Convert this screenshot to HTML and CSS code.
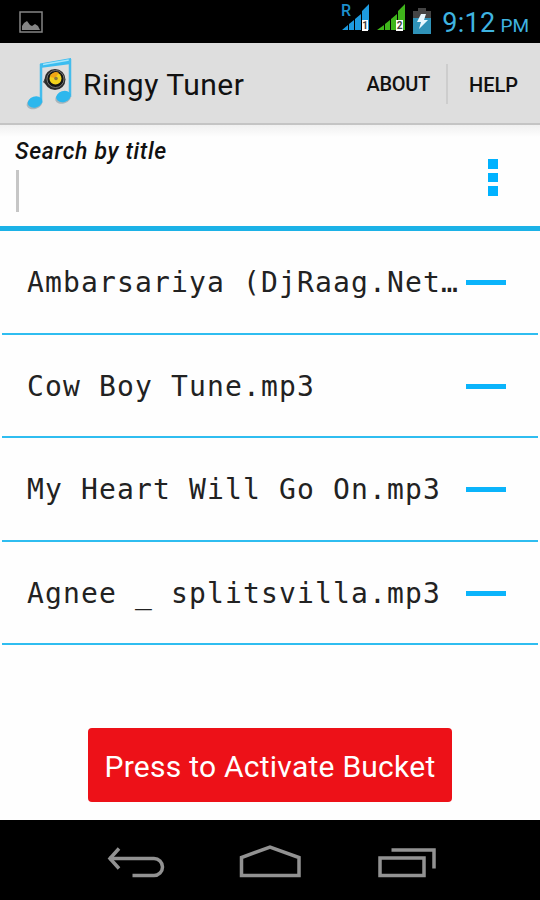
FILE: index.html
```html
<!DOCTYPE html>
<html lang="en">
<head>
    <meta charset="UTF-8">
    <meta name="viewport" content="width=device-width, initial-scale=1.0">
    <title>Ringy Tuner</title>
    <link rel="stylesheet" href="styles.css">
</head>
<body>
    <div class="status">
        <svg class="picture" width="24" height="22" viewBox="0 0 24 22">
            <rect x="1" y="1" width="22" height="20" fill="none" stroke="#858585" stroke-width="1.5"/>
            <path d="M3 19v-4l2-3 3-2 3 4 2 1 3-2 3 2 2 4z" fill="#858585"/>
        </svg>
        <div class="status-right">
            <svg width="92" height="34" viewBox="0 0 92 34">
                <text x="0" y="15" class="roam">R</text>
                <path d="M1 29l6-5v5zM8 23l5-4v10H8zM14 18l6-5v16h-6zM21 10l7-7v26h-7z" fill="#1d9be0"/>
                <path d="M36 29l7-5v5zM44 23l5-4v10h-5zM50 18l6-5v16h-6zM57 10l7-7v26h-7z" fill="#3fb51b"/>
                <rect x="21" y="19" width="6" height="11" fill="#fff"/>
                <rect x="55" y="19" width="7" height="11" fill="#fff"/>
                <text x="21.3" y="28" class="sim">1</text>
                <text x="55.8" y="28" class="sim">2</text>
                <path d="M77 7h8v3h5v7H72v-7h5z" fill="#444"/>
                <path d="M72 17h18v16H72z" fill="#2f92b8"/>
                <path d="M80 13h5l-2 6h4l-9 9 2-7h-4z" fill="#e8f8ff"/>
            </svg>
            <span class="clock">9:12</span>
            <span class="pm">PM</span>
        </div>
    </div>

    <div class="bar">
        <svg class="logo" width="48" height="54" viewBox="0 0 48 54">
            <path d="M14 6.500L45 1v6L14 11z" fill="#3cbdf0"/>
            <path d="M17 7.500L43 3" stroke="#a6e6fb" stroke-width="1.500"/>
            <path d="M15 7v39M44 2v38" stroke="#45bcec" stroke-width="2.500"/>
            <ellipse cx="8.500" cy="46.500" rx="8" ry="5.500" transform="rotate(-18 8.500 46.500)" fill="#a9b6bc"/>
            <ellipse cx="9" cy="45" rx="7.500" ry="5.500" transform="rotate(-18 9 45)" fill="#2db7ed"/>
            <ellipse cx="37" cy="41" rx="8" ry="5.500" transform="rotate(-18 37 41)" fill="#a9b6bc"/>
            <ellipse cx="37.500" cy="39.500" rx="7.500" ry="5.500" transform="rotate(-18 37.500 39.500)" fill="#2db7ed"/>
            <path d="M17 25l6-10 10 17-10-2z" fill="#444"/>
            <circle cx="29" cy="22.500" r="10.500" fill="#2b2b2b"/>
            <circle cx="29.500" cy="22" r="8.500" fill="#151515" stroke="#888" stroke-width=".8"/>
            <circle cx="29.500" cy="21.500" r="6" fill="#f3d31b"/>
            <path d="M24 20a6 6 0 0 1 9-4l-4 5z" fill="#f0a516"/>
            <circle cx="30" cy="21.500" r="1.800" fill="#8a7a42"/>
        </svg>
        <span class="title">Ringy Tuner</span>
        <span class="menu about">ABOUT</span>
        <span class="menu help">HELP</span>
    </div>

    <div class="search">
        <div>
            <p class="label">Search by title</p>
            <div class="cursor"></div>
        </div>
        <div class="dots"><i></i><i></i><i></i></div>
    </div>

    <div class="list">
        <div class="row"><span class="song">Ambarsariya (DjRaag.Net…</span><span class="minus"></span></div>
        <div class="row"><span class="song">Cow Boy Tune.mp3</span><span class="minus"></span></div>
        <div class="row"><span class="song">My Heart Will Go On.mp3</span><span class="minus"></span></div>
        <div class="row"><span class="song">Agnee _ splitsvilla.mp3</span><span class="minus"></span></div>
    </div>

    <div class="bottom">
        <button class="btn">Press to Activate Bucket</button>
    </div>

    <div class="nav">
        <svg width="340" height="40" viewBox="0 0 340 40" fill="none" stroke="#929292" stroke-width="3.500">
            <path d="M9 13.500h45a8.500 8.500 0 0 1 0 17H32.500"/>
            <path d="M19 3.500l-9 10 9 10"/>
            <path d="M141.500 30.500V12.500L170 2 199 12.500v18z"/>
            <rect x="280" y="13" width="44" height="17.500"/>
            <path d="M291.500 5H334v18.500"/>
        </svg>
    </div>
</body>
</html>
```

FILE: styles.css
```css
*{
    box-sizing: border-box;
}
body{
    margin: 0;
    height: 900px;
    display: flex;
    flex-direction: column;
    background-color: #fefefe;
    font-family: Roboto, sans-serif;
    color: #111;
    overflow: hidden;
}
.status{
    height: 43px;
    display: flex;
    justify-content: space-between;
    background-color: #000;
    padding: 0 11px 0 19px;
}
.picture{
    margin-top: 11px;
}
.status-right{
    display: flex;
    align-items: baseline;
    color: #3fb4e0;
}
.status-right svg{
    align-self: flex-start;
    margin: 1px 9px 0 0;
}
.roam{
    font-size: 16px;
    font-weight: 500;
    fill: #1d8fcc;
}
.sim{
    font-size: 10px;
    font-weight: 700;
    fill: #444;
}
.clock{
    font-size: 27px;
    line-height: 46px;
    letter-spacing: .3px;
}
.pm{
    margin-left: 5px;
    font-size: 19px;
}

.bar{
    height: 82px;
    flex: none;
    display: flex;
    align-items: center;
    background-color: #dedede;
    border-bottom: 2px solid #c4c4c4;
    padding: 1px 22px 0 26px;
}
.logo{
    margin-right: 9px;
}
.title{
    flex: 1;
    padding-top: 2px;
    font-size: 30px;
    letter-spacing: .5px;
}
.menu{
    padding-top: 2px;
    font-size: 20px;
    font-weight: 500;
}
.about{
    padding: 0 16px 0 0;
    line-height: 40px;
    letter-spacing: -.3px;
    border-right: 2px solid #cdcdcd;
}
.help{
    padding-left: 21px;
}

.search{
    height: 106px;
    flex: none;
    display: flex;
    justify-content: space-between;
    background: linear-gradient(#f0f0f0, #fefefe 12px);
    border-bottom: 5px solid #1cb2e7;
    padding: 0 42px 0 15px;
}
.label{
    margin: 13px 0 4px;
    font-size: 23px;
    line-height: 28px;
    letter-spacing: .65px;
    font-weight: 500;
    font-style: italic;
}
.cursor{
    width: 3px;
    height: 42px;
    margin-left: 1px;
    background-color: #c6c6c6;
}
.dots{
    display: flex;
    flex-direction: column;
    gap: 4px;
    margin-top: 34px;
}
.dots i{
    width: 10px;
    height: 9.6px;
    background-color: #00b2ff;
}

.row{
    height: 103.6px;
    display: flex;
    align-items: center;
    justify-content: space-between;
    margin: 0 2px;
    padding: 2px 32px 0 25px;
    border-bottom: 2px solid #2fbdf0;
}
.song{
    font-family: "DejaVu Sans Mono", monospace;
    font-size: 28px;
    letter-spacing: 1.14px;
    color: #222;
    white-space: nowrap;
}
.minus{
    width: 40px;
    height: 5px;
    flex: none;
    background-color: #0bb4fb;
}

.bottom{
    flex: 1;
    display: flex;
    justify-content: center;
    align-items: flex-start;
    padding-top: 83px;
}
.btn{
    width: 364px;
    height: 74px;
    border: none;
    border-radius: 4px;
    padding: 2px 0 0;
    background-color: #ed1118;
    color: #fff;
    font-family: Roboto, sans-serif;
    font-size: 30px;
    letter-spacing: .25px;
    white-space: nowrap;
}

.nav{
    height: 80px;
    flex: none;
    display: flex;
    justify-content: center;
    background-color: #000;
    padding-top: 25px;
}
```
